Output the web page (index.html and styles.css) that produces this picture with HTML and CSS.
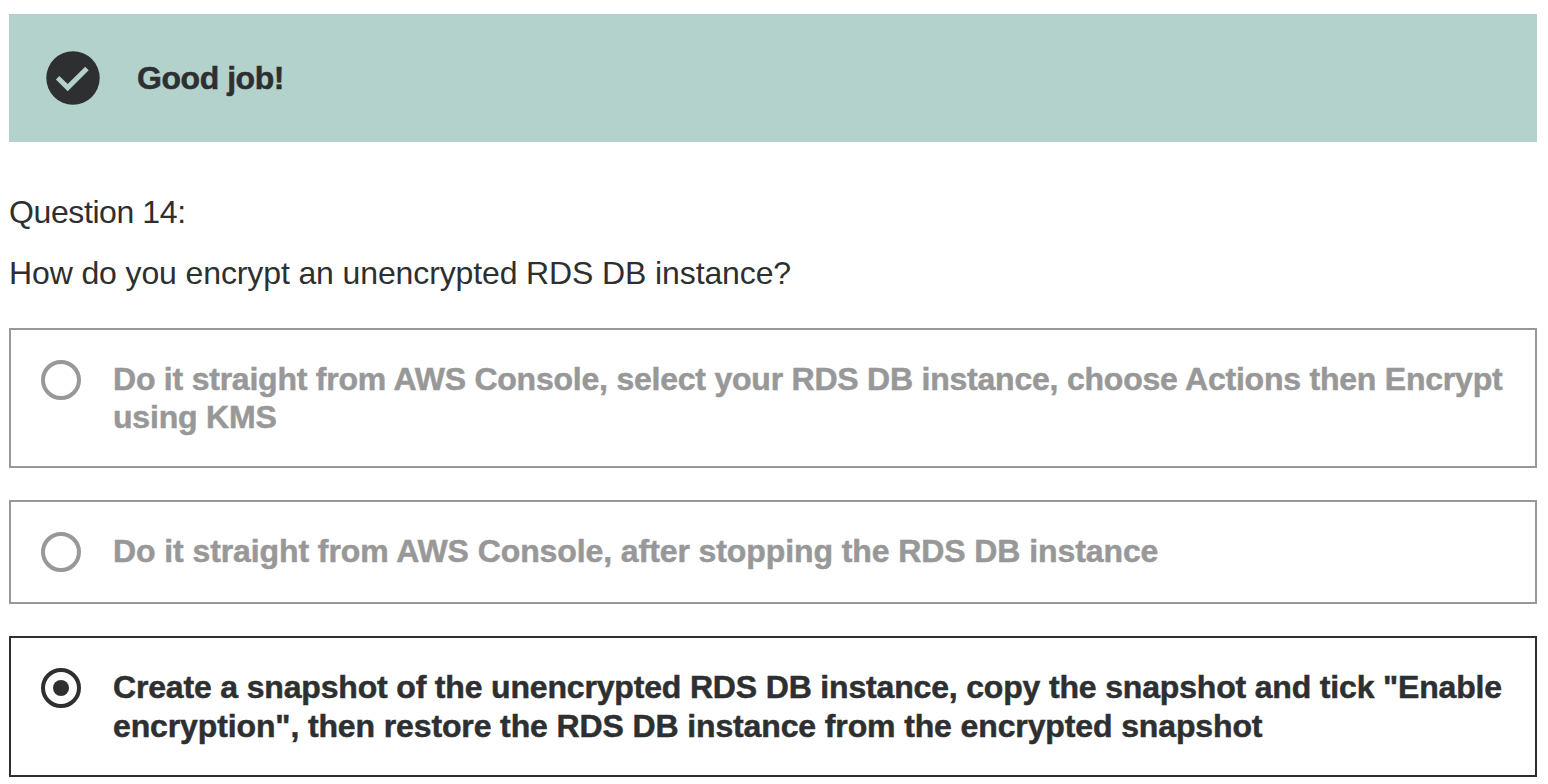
FILE: index.html
```html
<!DOCTYPE html>
<html lang="en">
<head>
<meta charset="utf-8">
<title>Question 14</title>
<link rel="stylesheet" href="styles.css">
</head>
<body>
<main class="quiz">
  <div class="alert">
    <svg class="alert-icon" viewBox="0 0 54 54"><circle cx="27" cy="27" r="26.7" fill="#2d2f31"/><path d="M9.900 28.600 13.300 24.900 21.700 33 39.200 15.700 42.700 19.200 21.700 40.200z" fill="#b4d2cc"/></svg>
    <p class="alert-title"><span class="line good">Good job!</span></p>
  </div>
  <p class="number"><span class="line num">Question 14:</span></p>
  <p class="prompt"><span class="line ask">How do you encrypt an unencrypted RDS DB instance?</span></p>
  <ul class="answers">
    <li class="answer">
      <span class="radio"></span>
      <div class="label"><span class="line a1">Do it straight from AWS Console, select your RDS DB instance, choose Actions then Encrypt</span><span class="line a2">using KMS</span></div>
    </li>
    <li class="answer">
      <span class="radio"></span>
      <div class="label"><span class="line b1">Do it straight from AWS Console, after stopping the RDS DB instance</span></div>
    </li>
    <li class="answer selected">
      <span class="radio"></span>
      <div class="label"><span class="line c1">Create a snapshot of the unencrypted RDS DB instance, copy the snapshot and tick "Enable</span><span class="line c2">encryption", then restore the RDS DB instance from the encrypted snapshot</span></div>
    </li>
  </ul>
</main>
</body>
</html>
```
FILE: styles.css
```css
* { box-sizing: border-box; margin: 0; padding: 0; }
body { background: #fff; color: #2d2f31; font-family: "Liberation Sans", Arial, sans-serif; font-size: 32px; overflow: hidden; }
.quiz { padding: 14px 11px 0 9px; }
.line { display: block; width: max-content; white-space: nowrap; }
.good { letter-spacing: -0.45px; }
.num { letter-spacing: -0.4px; }
.ask { letter-spacing: -0.12px; }
.a1 { letter-spacing: -0.225px; }
.a2 { letter-spacing: -0.2px; }
.b1 { letter-spacing: -0.09px; }
.c1 { letter-spacing: -0.17px; }
.c2 { letter-spacing: -0.125px; }
.alert { display: flex; align-items: center; gap: 37px; height: 128px; padding-left: 37px; background: #b4d2cc; }
.alert-icon { width: 54px; height: 54px; }
.alert-title { font-weight: 700; line-height: 38px; -webkit-text-stroke: 0.5px currentColor; }
.number { margin-top: 48px; line-height: 45px; }
.prompt { margin-top: 16px; line-height: 45px; }
.answers { display: flex; flex-direction: column; gap: 32px; margin-top: 31.6px; list-style: none; }
.answer { display: flex; gap: 32px; padding: 30px; border: 2px solid #989898; color: #989898; font-weight: 700; line-height: 38.4px; }
.label { -webkit-text-stroke: 0.5px currentColor; }
.selected { border-color: #2d2f31; color: #2d2f31; }
.radio { display: flex; align-items: center; justify-content: center; flex: none; width: 40px; height: 40px; border: 4px solid currentColor; border-radius: 50%; }
.selected .radio::before { content: ""; width: 16px; height: 16px; border-radius: 50%; background: currentColor; }
```
